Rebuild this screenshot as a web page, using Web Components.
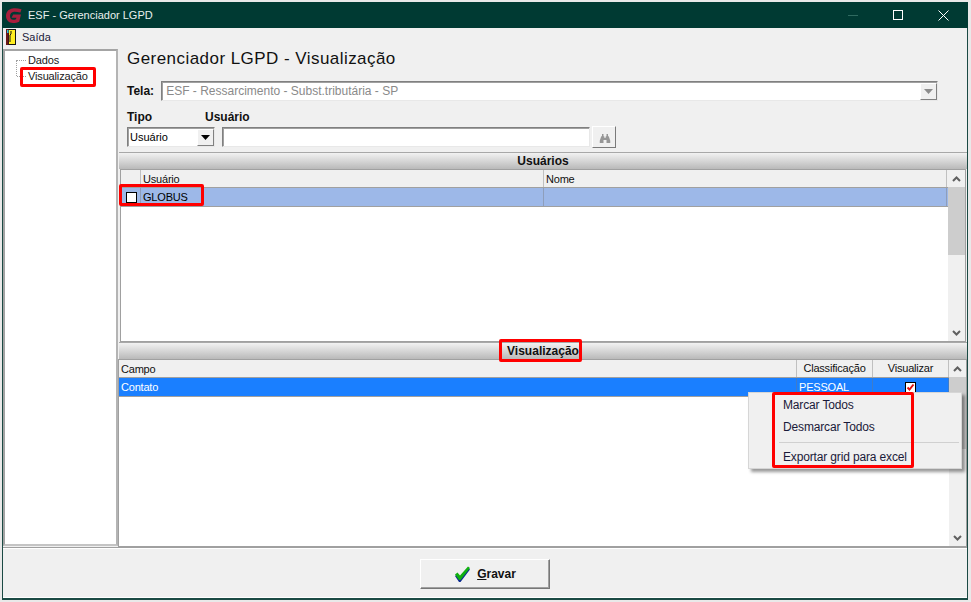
<!DOCTYPE html>
<html lang="pt">
<head>
<meta charset="utf-8">
<title>ESF - Gerenciador LGPD</title>
<style>
  html, body { margin: 0; height: 100%; background: #e9e9e9; overflow: hidden; }
  body { font: 12px "Liberation Sans", sans-serif; color: #000; }
</style>
</head>
<body>
<esf-window>
  <esf-titlebar slot="title">ESF - Gerenciador LGPD</esf-titlebar>
  <esf-menubar slot="menu">Saída</esf-menubar>
  <esf-tree slot="side">
    <span>Dados</span>
    <span>Visualização</span>
  </esf-tree>

  <lgpd-form slot="main"></lgpd-form>

  <lgpd-grid slot="main" heading="Usuários" cols="20px 403px 403px" style="--inset:1px; --inset-r:1px; --sec-h:190px">
    <grid-row slot="head" head>
      <grid-cell></grid-cell><grid-cell>Usuário</grid-cell><grid-cell>Nome</grid-cell>
    </grid-row>
    <grid-row style="--row-bg:#9db8e8; --row-c:#000">
      <grid-cell><tick-box></tick-box></grid-cell><grid-cell>GLOBUS</grid-cell><grid-cell></grid-cell>
    </grid-row>
    <v-scroll slot="scroll" thumb="68"></v-scroll>
  </lgpd-grid>

  <lgpd-grid slot="main" heading="Visualização" cols="678px 76px 76px" style="--inset:-1px; --sec-h:205px">
    <grid-row slot="head" head>
      <grid-cell>Campo</grid-cell><grid-cell center>Classificação</grid-cell><grid-cell center>Visualizar</grid-cell>
    </grid-row>
    <grid-row style="--row-bg:#1a7fff; --row-c:#fff">
      <grid-cell>Contato</grid-cell><grid-cell>PESSOAL</grid-cell><grid-cell center><tick-box checked></tick-box></grid-cell>
    </grid-row>
    <v-scroll slot="scroll" thumb="72"></v-scroll>
  </lgpd-grid>

  <esf-footer slot="foot"><esf-button>Gravar</esf-button></esf-footer>

  <context-menu slot="over" style="left:748px; top:392px">
    <menu-entry>Marcar Todos</menu-entry>
    <menu-entry>Desmarcar Todos</menu-entry>
    <menu-entry sep></menu-entry>
    <menu-entry>Exportar grid para excel</menu-entry>
  </context-menu>

  <mark-box slot="over" style="left:20px; top:67px; width:76px; height:20px"></mark-box>
  <mark-box slot="over" style="left:119px; top:184px; width:85px; height:22px"></mark-box>
  <mark-box slot="over" style="left:499px; top:339px; width:83px; height:23px"></mark-box>
  <mark-box slot="over" style="left:772px; top:392px; width:142px; height:76px"></mark-box>
</esf-window>

<script>
function shadow(el, html) {
  const root = el.attachShadow({ mode: "open" });
  root.innerHTML = html;
  return root;
}

class EsfWindow extends HTMLElement {
  constructor() {
    super();
    shadow(this, `
      <style>
        :host { display: block; position: relative; width: 971px; height: 602px; }
        .frame {
          box-sizing: border-box;
          position: absolute; inset: 2px 3px 2px 2px;
          border: solid #1b4a44; border-width: 0 1px 2px 1px;
          background: #f0f0f0;
          display: flex; flex-direction: column;
        }
        .body { display: flex; flex: 1; min-height: 0; }
        .side { width: 115px; flex: none; padding-top: 3px; }
        .main { flex: 1; min-width: 0; display: flex; flex-direction: column; padding-left: 1px; }
      </style>
      <div class="frame">
        <slot name="title"></slot>
        <slot name="menu"></slot>
        <div class="body">
          <div class="side"><slot name="side"></slot></div>
          <div class="main"><slot name="main"></slot></div>
        </div>
        <slot name="foot"></slot>
      </div>
      <slot name="over"></slot>`);
  }
}

class EsfTitlebar extends HTMLElement {
  constructor() {
    super();
    shadow(this, `
      <style>
        :host {
          display: flex; align-items: center; height: 26px; flex: none; padding-right: 2px;
          margin: 0 -1px; background: #003a33; color: #e8f0ee; font-size: 11px;
        }
        .logo { margin-left: 4px; width: 16px; height: 15px; flex: none; }
        .txt { margin-left: 6px; flex: 1; }
        .btn { width: 45px; height: 26px; display: flex; align-items: center; justify-content: center; flex: none; }
      </style>
      <svg class="logo" viewBox="0 0 16 15">
        <path d="M15.5 1.2 C12 .2 9 0 6.5 .4 C2.5 1 0 4 0 8 C0 12.2 3 15 7 15 C9.5 15 11.5 14.6 13.2 13.8 L15 6.6 L7.2 6.6 L5.6 9.8 L10.4 9.8 L10 11.3 C9 11.7 8 11.8 7.2 11.8 C5.2 11.8 4 10.2 4 8 C4 5.6 5.6 3.8 8 3.7 C10 3.6 12 3.9 14.4 4.6 Z" fill="#a81f3d"/>
      </svg>
      <span class="txt"><slot></slot></span>
      <div class="btn"><svg width="11" height="11"><path d="M0 5.5H10" stroke="#2f6a60"/></svg></div>
      <div class="btn"><svg width="11" height="11"><rect x=".5" y=".5" width="9" height="9" fill="none" stroke="#fff"/></svg></div>
      <div class="btn"><svg width="11" height="11"><path d="M.5 .5L10.5 10.5M10.5 .5L.5 10.5" stroke="#fff"/></svg></div>`);
  }
}

class EsfMenubar extends HTMLElement {
  constructor() {
    super();
    shadow(this, `
      <style>
        :host { display: flex; align-items: center; height: 18px; flex: none; font-size: 11px; color: #1a1a3a; }
        svg { margin-left: 3px; margin-right: 6px; flex: none; }
      </style>
      <svg width="10" height="16" viewBox="0 0 10 16">
        <rect width="10" height="16" fill="#151515"/>
        <rect x="0" y="0" width="2.5" height="16" fill="#6b1a1a"/>
        <rect x="1" y="1" width="1.5" height="3" fill="#27c4e0"/>
        <rect x="3" y="1" width="6" height="14" fill="#ffee22"/>
        <path d="M5 2V5L4 6V13" fill="none" stroke="#111"/>
      </svg>
      <slot></slot>`);
  }
}

class EsfTree extends HTMLElement {
  constructor() {
    super();
    shadow(this, `
      <style>
        :host {
          display: block; box-sizing: border-box; height: 497px; margin-right: 0;
          background: #fff; border: 2px solid; border-color: #a4a4a4 #b4b4b4 #c4c4c4 #a4a4a4;
          padding: 1px 0 0 23px; font-size: 11px; letter-spacing: -.15px; position: relative;
        }
        ::slotted(span) { display: block; height: 16px; line-height: 16px; color: #202020; }
        .dots {
          position: absolute; left: 11px; top: 9px; width: 9px; height: 16px;
          border-left: 1px dotted #a0a0a0;
        }
        .dots::before, .dots::after {
          content: ""; position: absolute; left: 0; width: 9px; border-top: 1px dotted #a0a0a0;
        }
        .dots::before { top: 0; }
        .dots::after { top: 16px; }
      </style>
      <div class="dots"></div>
      <slot></slot>`);
  }
}

class LgpdForm extends HTMLElement {
  constructor() {
    super();
    shadow(this, `
      <style>
        :host { display: block; height: 106px; flex: none; padding: 2px 0 0 8px; box-sizing: border-box; }
        h1 { margin: 0; height: 32px; font: 17px/22px "Liberation Sans", sans-serif; letter-spacing: .45px; color: #111; }
        .tela { display: flex; align-items: center; height: 22px; gap: 7px; }
        b { font-size: 12px; color: #111; }
        .field {
          box-sizing: border-box; height: 20px; background: #fff;
          border: 1px solid; border-color: #808080 #e8e8e8 #e8e8e8 #808080;
          box-shadow: inset 1px 1px 0 #a0a0a0;
        }
        .combo {
          flex: none; width: 777px; display: flex; align-items: center;
          color: #8a8a8a; padding-left: 4px; background: #fff;
        }
        .combo span { flex: 1; }
        .drop {
          width: 17px; height: 17px; flex: none; background: #f0f0f0; display: flex;
          align-items: center; justify-content: center; box-sizing: border-box;
          border: 1px solid; border-color: #fff #808080 #808080 #fff;
        }
        .labels { display: flex; height: 17px; margin-top: 5px; align-items: flex-end; }
        .labels b:first-child { width: 78px; }
        .row { display: flex; align-items: center; gap: 7px; margin-top: 2px; height: 22px; }
        .tipo { width: 88px; display: flex; align-items: center; padding-left: 2px; font-size: 11px; }
        .tipo span { flex: 1; }
        .user { width: 368px; }
        .find {
          box-sizing: border-box; width: 24px; height: 22px; margin-left: -5px; background: #f0f0f0;
          border: 1px solid; border-color: #fff #7a7a7a #7a7a7a #fff; padding: 2px 0 0 2px;
          display: flex; align-items: center; justify-content: center;
        }
      </style>
      <h1>Gerenciador LGPD - Visualização</h1>
      <div class="tela">
        <b>Tela:</b>
        <div class="field combo">
          <span>ESF - Ressarcimento - Subst.tributária - SP</span>
          <div class="drop"><svg width="9" height="5"><path d="M0 0H9L4.5 5Z" fill="#8c8c8c"/></svg></div>
        </div>
      </div>
      <div class="labels"><b>Tipo</b><b>Usuário</b></div>
      <div class="row">
        <div class="field tipo">
          <span>Usuário</span>
          <div class="drop"><svg width="9" height="5"><path d="M0 0H9L4.5 5Z" fill="#000"/></svg></div>
        </div>
        <div class="field user"></div>
        <div class="find">
          <svg width="12" height="9" viewBox="0 0 14 12">
            <path d="M3 0H5V3H6V5H8V3H9V0H11V3H12L14 9V12H9V8H5V12H0V9L2 3H3Z" fill="#969696"/>
          </svg>
        </div>
      </div>`);
  }
}

class LgpdGrid extends HTMLElement {
  constructor() {
    super();
    const root = shadow(this, `
      <style>
        :host { display: block; flex: none; height: var(--sec-h); box-sizing: border-box; }
        .sec { height: 100%; display: flex; flex-direction: column; }
        .cap {
          height: 16px; flex: none; text-align: center; font-weight: bold; font-size: 12px; line-height: 16px;
          color: #111; background: linear-gradient(#f2f2f2, #b9b9b9);
          border-top: 1px solid #a8a8a8;
        }
        .box {
          flex: 1; min-height: 0; display: flex; margin: 0 var(--inset-r, 0) 0 var(--inset, 0);
          border: 1px solid #a0a0a0; background: #fff;
        }
        .table { flex: 1; min-width: 0; display: flex; flex-direction: column; }
      </style>
      <div class="sec">
        <div class="cap"></div>
        <div class="box">
          <div class="table">
            <slot name="head"></slot>
            <slot></slot>
          </div>
          <slot name="scroll"></slot>
        </div>
      </div>`);
    root.querySelector(".cap").textContent = this.getAttribute("heading");
    this.style.setProperty("--cols", this.getAttribute("cols"));
  }
}

class GridRow extends HTMLElement {
  constructor() {
    super();
    const head = this.hasAttribute("head");
    shadow(this, `
      <style>
        :host {
          display: grid; grid-template-columns: var(--cols); height: ${head ? 17 : 18}px;
          background: ${head ? "#f0f0f0" : "var(--row-bg)"}; color: ${head ? "#111" : "var(--row-c)"};
          border-bottom: 1px solid #a0a0a0; font-size: 11px; letter-spacing: -.2px; line-height: ${head ? 19 : 18}px;
        }
      </style>
      <slot></slot>`);
  }
}

class GridCell extends HTMLElement {
  constructor() {
    super();
    shadow(this, `
      <style>
        :host {
          display: block; box-sizing: border-box; padding-left: 2px; overflow: hidden; white-space: nowrap;
          border-right: 1px solid rgba(120,120,120,.4);
        }
        :host([center]) { display: flex; justify-content: center; align-items: center; padding: 0; }
      </style>
      <slot></slot>`);
  }
}

class TickBox extends HTMLElement {
  constructor() {
    super();
    const on = this.hasAttribute("checked");
    shadow(this, `
      <style>
        :host { display: block; box-sizing: border-box; width: 11px; height: 11px; margin: 4px 0 0 3px; background: #fff; border: 1px solid #000; }
        :host([checked]) { margin: 0; }
        svg { display: block; }
      </style>
      ${on ? '<svg width="9" height="9"><path d="M1.5 4.5L3.5 6.5L7.5 1.5" fill="none" stroke="#e01010" stroke-width="2"/></svg>' : ""}`);
  }
}

class VScroll extends HTMLElement {
  constructor() {
    super();
    const h = this.getAttribute("thumb");
    shadow(this, `
      <style>
        :host { display: flex; flex-direction: column; flex: none; width: 17px; background: #f0f0f0; }
        .a { height: 17px; flex: none; display: flex; align-items: center; justify-content: center; }
        .t { flex: 1; }
        .th { height: ${h}px; background: #cdcdcd; flex: none; }
      </style>
      <div class="a"><svg width="9" height="6"><path d="M1 5L4.5 1.5L8 5" fill="none" stroke="#606060" stroke-width="2"/></svg></div>
      <div class="th"></div>
      <div class="t"></div>
      <div class="a"><svg width="9" height="6"><path d="M1 1L4.5 4.5L8 1" fill="none" stroke="#606060" stroke-width="2"/></svg></div>`);
  }
}

class EsfFooter extends HTMLElement {
  constructor() {
    super();
    shadow(this, `
      <style>
        :host {
          display: flex; justify-content: center; align-items: flex-start; flex: none; box-sizing: border-box;
          height: 51px; padding-top: 11px; border-top: 1px solid #a0a0a0; box-shadow: inset 0 1px 0 #fff, inset 0 -1px 0 #fff;
        }
      </style>
      <slot></slot>`);
  }
}

class EsfButton extends HTMLElement {
  constructor() {
    super();
    shadow(this, `
      <style>
        :host {
          display: flex; align-items: center; justify-content: center; gap: 6px; box-sizing: border-box;
          width: 130px; height: 30px; background: #f0f0f0; font-weight: bold; font-size: 12px; color: #111;
          border: 1px solid; border-color: #fff #777 #777 #fff; box-shadow: inset -1px -1px 0 #a0a0a0;
        }
        .g { text-decoration: underline; }
      </style>
      <svg width="17" height="16" viewBox="0 0 17 16">
        <path d="M1 9L3.5 7L6 10L14 1L16 2.5L6.5 15H5Z" fill="#0a2a90" transform="translate(0 1)"/>
        <path d="M1 8.5L3.5 6.5L6 9.5L14 .5L16 2L6.5 14H5Z" fill="#10b010"/>
      </svg>
      <span id="t"><span class="g">G</span>ravar</span>`);
  }
}

class ContextMenu extends HTMLElement {
  constructor() {
    super();
    shadow(this, `
      <style>
        :host {
          position: absolute; display: block; box-sizing: border-box; width: 214px; height: 77px; padding-top: 2px;
          background: #f0f0f0; border: 1px solid #d6d6d6; box-shadow: 3px 3px 3px rgba(0,0,0,.4);
        }
      </style>
      <slot></slot>`);
  }
}

class MenuEntry extends HTMLElement {
  constructor() {
    super();
    shadow(this, `
      <style>
        :host { display: block; height: 22px; line-height: 21px; padding-left: 34px; font-size: 12px; letter-spacing: -.15px; color: #1a1a3a; }
        :host([sep]) { height: 1px; margin: 3px 2px 4px 30px; padding: 0; background: #d0d0d0; }
      </style>
      <slot></slot>`);
  }
}

class MarkBox extends HTMLElement {
  constructor() {
    super();
    shadow(this, `
      <style>
        :host { position: absolute; display: block; box-sizing: border-box; border: 3px solid #f00; border-radius: 2px; pointer-events: none; }
      </style>`);
  }
}

customElements.define("esf-window", EsfWindow);
customElements.define("esf-titlebar", EsfTitlebar);
customElements.define("esf-menubar", EsfMenubar);
customElements.define("esf-tree", EsfTree);
customElements.define("lgpd-form", LgpdForm);
customElements.define("lgpd-grid", LgpdGrid);
customElements.define("grid-row", GridRow);
customElements.define("grid-cell", GridCell);
customElements.define("tick-box", TickBox);
customElements.define("v-scroll", VScroll);
customElements.define("esf-footer", EsfFooter);
customElements.define("esf-button", EsfButton);
customElements.define("context-menu", ContextMenu);
customElements.define("menu-entry", MenuEntry);
customElements.define("mark-box", MarkBox);
</script>
</body>
</html>
